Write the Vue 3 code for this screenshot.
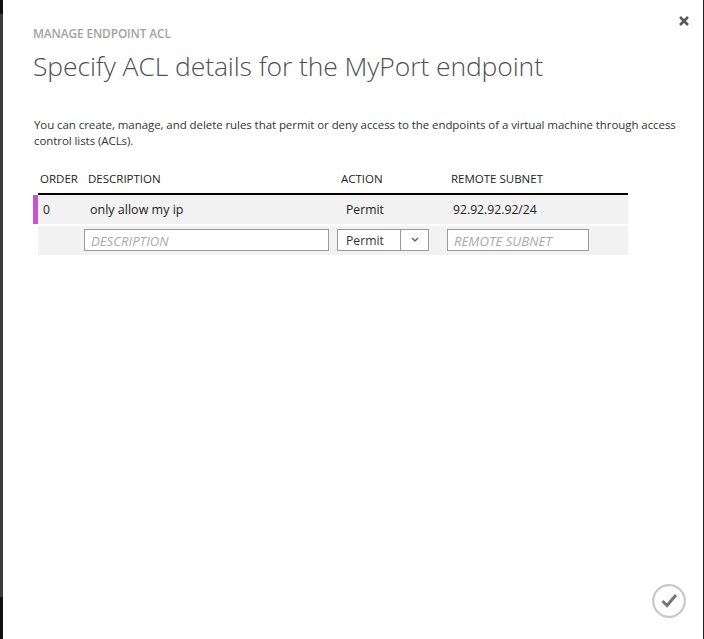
<template>
  <div class="page">
    <div class="edge-left">
      <div class="edge-cap top"></div>
      <div class="edge-mid"></div>
      <div class="edge-cap bottom"></div>
    </div>

    <div class="dialog">
      <div class="close-row">
        <button class="close" title="Close">
          <svg width="10" height="10" viewBox="0 0 10 10">
            <path d="M1 1L9 9M9 1L1 9" stroke="#5a5a5a" stroke-width="2.6" fill="none" />
          </svg>
        </button>
      </div>

      <div class="subtitle">MANAGE ENDPOINT ACL</div>
      <h1 class="title">Specify ACL details for the MyPort endpoint</h1>
      <p class="intro">
        You can create, manage, and delete rules that permit or deny access to the endpoints of a virtual machine through access control lists (ACLs).
      </p>

      <div class="acl">
        <div class="row head">
          <div class="col-order">ORDER</div>
          <div class="col-desc">DESCRIPTION</div>
          <div class="col-action">ACTION</div>
          <div class="col-subnet">REMOTE SUBNET</div>
        </div>

        <div v-for="rule in rules" :key="rule.order" class="row rule">
          <span class="marker"></span>
          <div class="col-order">{{ rule.order }}</div>
          <div class="col-desc">{{ rule.description }}</div>
          <div class="col-action">{{ rule.action }}</div>
          <div class="col-subnet">{{ rule.subnet }}</div>
        </div>

        <div class="row new-rule">
          <div></div>
          <div><input class="field desc-input" placeholder="DESCRIPTION" /></div>
          <div>
            <div class="select">
              <span class="select-value">Permit</span>
              <span class="select-arrow">
                <svg width="8" height="6" viewBox="0 0 8 6">
                  <path d="M1 1L4 4L7 1" stroke="#666" stroke-width="1.5" fill="none" />
                </svg>
              </span>
            </div>
          </div>
          <div><input class="field subnet-input" placeholder="REMOTE SUBNET" /></div>
        </div>
      </div>

      <div class="footer">
        <button class="confirm" title="OK">
          <svg width="34" height="34" viewBox="0 0 34 34">
            <circle cx="17" cy="17" r="15.8" stroke="#c8c8c8" stroke-width="2.2" fill="none" />
            <path d="M10.5 17L15 21.5L24 11" stroke="#767676" stroke-width="3" fill="none" />
          </svg>
        </button>
      </div>
    </div>

    <div class="edge-right"></div>
  </div>
</template>

<script setup>
import { ref } from 'vue'

const rules = ref([
  { order: 0, description: 'only allow my ip', action: 'Permit', subnet: '92.92.92.92/24' }
])
</script>

<style>
html, body {
  margin: 0;
  background: #fff;
}
</style>

<style scoped>
.page {
  display: flex;
  width: 704px;
  height: 639px;
  overflow: hidden;
  font-family: "Open Sans", "Noto Sans", sans-serif;
  color: #222;
  background: #fff;
}

.edge-left {
  display: flex;
  flex-direction: column;
  width: 3px;
  flex: none;
}

.edge-cap.top {
  height: 14px;
  background: #111;
}

.edge-mid {
  flex: 1;
  background: #3b3b3b;
}

.edge-cap.bottom {
  height: 42px;
  background: #111;
}

.edge-right {
  width: 1px;
  flex: none;
  background: #222;
}

.dialog {
  flex: 1;
  display: flex;
  flex-direction: column;
  padding: 0 20px 0 30px;
  min-width: 0;
}

.close-row {
  display: flex;
  justify-content: flex-end;
  height: 26px;
  padding-top: 16px;
  box-sizing: border-box;
}

.close {
  width: 10px;
  height: 10px;
  padding: 0;
  margin-right: -6px;
  border: 0;
  background: none;
  line-height: 0;
}

.subtitle {
  font-size: 11.85px;
  font-weight: 600;
  line-height: 15px;
  color: #a3a3a3;
  letter-spacing: -0.1px;
}

.title {
  margin: 7px 0 0;
  font-size: 26.5px;
  font-weight: 300;
  line-height: 37px;
  letter-spacing: -0.1px;
  color: #505050;
}

.intro {
  margin: 32px 0 0 1px;
  width: 650px;
  font-size: 11.5px;
  line-height: 16px;
  letter-spacing: -0.07px;
  color: #333;
}

.acl {
  width: 590px;
  margin: 10px 0 0 5px;
}

.row {
  display: grid;
  grid-template-columns: 46px 253px 110px 181px;
  align-items: center;
  font-size: 12.2px;
}

.head {
  height: 36px;
  padding-top: 4px;
  box-sizing: border-box;
  border-bottom: 2px solid #000;
  color: #222;
  font-size: 11.5px;
}

.head .col-order {
  padding-left: 2px;
}

.head .col-desc,
.head .col-action,
.head .col-subnet {
  padding-left: 4px;
}

.rule {
  position: relative;
  height: 29px;
  background: #f2f2f2;
}

.marker {
  position: absolute;
  left: -5px;
  top: 0;
  bottom: 0;
  width: 5px;
  background: #c653cf;
}

.rule .col-order {
  padding-left: 5px;
}

.rule .col-desc {
  padding-left: 6px;
  font-size: 12.5px;
}

.rule .col-action {
  padding-left: 9px;
}

.rule .col-subnet {
  padding-left: 6px;
}

.new-rule {
  height: 29px;
  margin-top: 2px;
  padding-bottom: 1px;
  box-sizing: border-box;
  background: #f2f2f2;
}

.new-rule > div {
  display: flex;
  align-items: center;
}

.field {
  height: 22px;
  box-sizing: border-box;
  padding: 2px 6px 0;
  border: 1px solid #9a9a9a;
  border-radius: 0;
  background: #fff;
  font: italic 13.2px "Open Sans", sans-serif;
  outline: none;
}

.field::placeholder {
  color: #a9a9a9;
  opacity: 1;
}

.desc-input {
  width: 245px;
}

.subnet-input {
  width: 142px;
}

.select {
  display: flex;
  width: 92px;
  height: 22px;
  box-sizing: border-box;
  border: 1px solid #9a9a9a;
  background: #fff;
}

.select-value {
  flex: 1;
  padding-left: 8px;
  line-height: 22px;
  color: #333;
}

.select-arrow {
  display: flex;
  align-items: center;
  justify-content: center;
  width: 27px;
  border-left: 1px solid #9a9a9a;
}

.footer {
  margin-top: auto;
  display: flex;
  justify-content: flex-end;
  padding-bottom: 21px;
}

.confirm {
  width: 34px;
  height: 34px;
  padding: 0;
  margin-right: -3px;
  border: 0;
  background: none;
  line-height: 0;
}
</style>
